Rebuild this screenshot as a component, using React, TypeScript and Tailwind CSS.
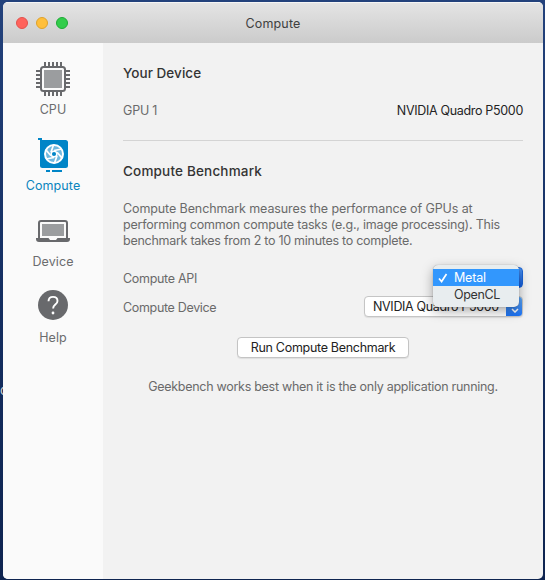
import type { ReactNode } from "react";

const CpuIcon = () => (
  <svg width="34" height="34" viewBox="0 0 34 34" fill="none">
    <path
      d="M9 0v5M13 0v5M17 0v5M21 0v5M25 0v5M9 29v5M13 29v5M17 29v5M21 29v5M25 29v5M0 9h5M0 13h5M0 17h5M0 21h5M0 25h5M29 9h5M29 13h5M29 17h5M29 21h5M29 25h5"
      stroke="#68696c"
      strokeWidth="2"
    />
    <rect x="5" y="5" width="24" height="24" rx="2.5" fill="#fafafa" stroke="#68696c" strokeWidth="2" />
    <rect x="8" y="8" width="18" height="18" fill="#9b9d9f" />
  </svg>
);

const ComputeIcon = () => (
  <svg width="34" height="34" viewBox="0 0 34 34" fill="none">
    <path d="M2 0h4v2h23.500a2.500 2.500 0 0 1 2.500 2.500v23a2.500 2.500 0 0 1-2.500 2.500h-23A2.500 2.500 0 0 1 4 27.500V2H2z" fill="#0085c7" />
    <path d="M10 32h4v2h-4zM16 32h10v2H16z" fill="#0085c7" />
    <circle cx="18" cy="16" r="9" fill="#72b9de" stroke="#fff" strokeWidth="2" />
    <g stroke="#fff" strokeWidth="1.700">
      {[0, 60, 120, 180, 240, 300].map((angle) => (
        <path key={angle} d="M18 12.500 26 11" transform={`rotate(${angle} 18 16)`} />
      ))}
    </g>
    <circle cx="18" cy="16" r="2.800" fill="#0085c7" stroke="#fff" strokeWidth="1.500" />
  </svg>
);

const DeviceIcon = () => (
  <svg width="34" height="34" viewBox="0 0 34 34" fill="none">
    <path d="M3 25V9a2 2 0 0 1 2-2h24a2 2 0 0 1 2 2v16" stroke="#68696c" strokeWidth="2" />
    <rect x="6" y="10" width="22" height="12" fill="#9b9d9f" />
    <path d="M0 24h12.500l1.500 2h6l1.500-2H34v1a3 3 0 0 1-3 3H3a3 3 0 0 1-3-3z" fill="#68696c" />
  </svg>
);

const HelpIcon = () => (
  <svg width="34" height="34" viewBox="0 0 34 34" fill="none">
    <circle cx="17" cy="15" r="15" fill="#68696c" />
    <path d="M12.500 11.200c.1-2.700 1.900-4.300 4.500-4.300s4.500 1.600 4.500 4c0 3.700-4.400 3.700-4.400 7.500" stroke="#fff" strokeWidth="1.900" />
    <circle cx="17" cy="23" r="1.400" fill="#fff" />
  </svg>
);

const items: { label: string; icon: ReactNode; active?: boolean }[] = [
  { label: "CPU", icon: <CpuIcon /> },
  { label: "Compute", icon: <ComputeIcon />, active: true },
  { label: "Device", icon: <DeviceIcon /> },
  { label: "Help", icon: <HelpIcon /> },
];

function Sidebar() {
  return (
    <nav className="flex w-[100px] shrink-0 flex-col items-center gap-5 bg-[#fafafa] pt-[19px]">
      {items.map((item) => (
        <div key={item.label} className="flex flex-col items-center gap-1.5">
          {item.icon}
          <span
            className={`text-[12.5px] leading-4 tracking-[0.1px] ${item.active ? "text-[#0a84bd]" : "text-[#6b6c6e]"}`}
          >
            {item.label}
          </span>
        </div>
      ))}
    </nav>
  );
}

function ApiMenu() {
  return (
    <div className="absolute -top-[2px] right-1 h-[42px] w-[86px] rounded-[5px] bg-[#e8edef] pt-1 text-[12.5px] leading-[17px] text-[#333] shadow-[0_4px_12px_rgba(0,0,0,0.35),0_0_1px_rgba(0,0,0,0.4)]">
      <div className="flex h-[17px] items-center bg-[#3297fd] pl-[5px] text-white">
        <svg width="10" height="10" viewBox="0 0 10 10" fill="none">
          <path d="m1 5.500 2.600 3L8.500 1" stroke="currentColor" strokeWidth="1.700" />
        </svg>
        <span className="ml-1.5 tracking-[-0.2px]">Metal</span>
      </div>
      <div className="pl-[21px] tracking-[-0.35px]">OpenCL</div>
    </div>
  );
}

export default function App() {
  return (
    <div className="h-[580px] w-[545px] overflow-hidden bg-gradient-to-b from-[#23427c] via-[#152f62] to-[#0e2450] font-['Inter',sans-serif]">
      <div className="relative flex h-full flex-col pt-[2px] pr-[2px] pb-px pl-[3px]">
        <span className="absolute top-[382px] left-0 text-[13px] leading-4 text-[#d5d5d5]">c</span>
        <div className="relative flex min-h-0 flex-1 flex-col overflow-hidden rounded-[5px] bg-[#f2f2f2]">
          <header className="grid h-[41px] shrink-0 grid-cols-[1fr_auto_1fr] items-center border-t border-[#f5f5f5] bg-gradient-to-b from-[#e4e4e4] to-[#cbcbcb] px-[13px]">
            <div className="flex gap-2">
              <span className="size-3 rounded-full border border-[#e2524d] bg-[#ff635c]" />
              <span className="size-3 rounded-full border border-[#dfa22b] bg-[#ffbf3b]" />
              <span className="size-3 rounded-full border border-[#1dab35] bg-[#32cd4b]" />
            </div>
            <h1 className="pt-px text-[12.5px] leading-4 tracking-[0.15px] text-[#404040]">Compute</h1>
          </header>

          <div className="flex min-h-0 flex-1">
            <Sidebar />
            <main className="flex-1 px-5 pt-[22px] text-[12.5px] leading-4 text-[#6a6a6a]">
              <h2 className="text-[13.5px] font-medium tracking-[0.05px] text-[#343434]">Your Device</h2>
              <div className="mt-[22px] flex justify-between">
                <span className="tracking-[-0.2px]">GPU 1</span>
                <span className="tracking-[-0.32px] text-[#242424]">NVIDIA Quadro P5000</span>
              </div>
              <hr className="mt-[21px] border-[#d4d4d4]" />

              <h2 className="mt-[22px] text-[13.5px] font-medium tracking-[0.18px] text-[#343434]">Compute Benchmark</h2>
              <p className="mt-[22px] whitespace-nowrap">
                <span className="tracking-[-0.1px]">Compute Benchmark measures the performance of GPUs at</span>
                <br />
                <span className="tracking-[-0.2px]">performing common compute tasks (e.g., image processing). This</span>
                <br />
                <span className="tracking-[-0.27px]">benchmark takes from 2 to 10 minutes to complete.</span>
              </p>

              <div className="relative mt-[18px] flex h-[21px] items-center justify-between">
                <span className="pt-[3px] tracking-[-0.3px]">Compute API</span>
                <div className="h-[21px] w-[90px] rounded-[4px] border border-[#1b65d8] bg-gradient-to-b from-[#4a91ef] to-[#0f5be0]" />
                <div className="absolute inset-0 z-10">
                  <ApiMenu />
                </div>
              </div>
              <div className="mt-2 flex h-[21px] items-center justify-between">
                <span className="pt-[3px] tracking-[-0.33px]">Compute Device</span>
                <div className="flex h-[21px] w-[159px] overflow-hidden rounded-[4px] border border-[#c5c5c5] bg-white shadow-[0_1px_1px_rgba(0,0,0,0.08)]">
                  <span className="flex-1 pl-2 leading-[20px] tracking-[-0.34px] whitespace-nowrap text-[#222]">NVIDIA Quadro P5000</span>
                  <div className="-my-px -mr-px flex w-[17px] flex-col items-center justify-center gap-[2px] bg-gradient-to-b from-[#62acf9] to-[#176ff5]">
                    <svg width="8" height="5" viewBox="0 0 8 5" fill="none">
                      <path d="m1 4 3-3 3 3" stroke="white" strokeWidth="1.500" />
                    </svg>
                    <svg width="8" height="5" viewBox="0 0 8 5" fill="none">
                      <path d="m1 1 3 3 3-3" stroke="white" strokeWidth="1.500" />
                    </svg>
                  </div>
                </div>
              </div>

              <button className="mx-auto mt-5 block h-[21px] w-[172px] rounded-[4px] border border-[#c4c4c4] bg-white text-[12.5px] leading-[19px] tracking-[-0.3px] whitespace-nowrap text-[#222] shadow-[0_1px_1px_rgba(0,0,0,0.08)]">
                Run Compute Benchmark
              </button>
              <p className="mt-[21px] text-center tracking-[-0.28px] whitespace-nowrap">
                Geekbench works best when it is the only application running.
              </p>
            </main>
          </div>
        </div>
      </div>
    </div>
  );
}
